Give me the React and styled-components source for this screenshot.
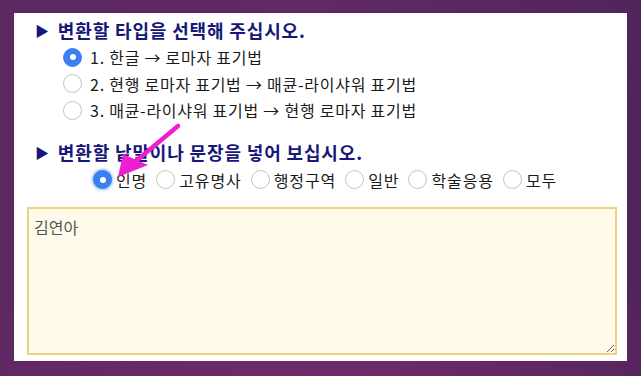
import React, { useState } from "react";
import styled, { createGlobalStyle } from "styled-components";

const GlobalStyle = createGlobalStyle`
  html, body {
    margin: 0;
    padding: 0;
  }
  body {
    width: 641px;
    height: 376px;
    overflow: hidden;
    background:
      radial-gradient(ellipse 420px 140px at 52% 100%, #6e2a6a 0%, rgba(110, 42, 106, 0) 100%),
      linear-gradient(100deg, #5c2860 0%, #602a62 45%, #4e2459 100%);
    font-family: "Noto Sans CJK KR", "Noto Sans", sans-serif;
  }
`;

const Stage = styled.div`
  position: relative;
  width: 641px;
  height: 376px;
  padding: 13px 0 0 14px;
  box-sizing: border-box;
`;

const Panel = styled.div`
  width: 613px;
  height: 348px;
  background: #ffffff;
  box-sizing: border-box;
  padding: 5px 10px 0 13px;
  display: flex;
  flex-direction: column;
`;

const Heading = styled.h3`
  margin: ${(p) => p.$gap || 0}px 0 0;
  padding-left: 8px;
  height: 23px;
  display: flex;
  align-items: center;
  gap: 8px;
  font-size: 18px;
  font-weight: 700;
  color: #17177a;
  letter-spacing: 0.85px;
`;

const Marker = styled.span`
  font-size: 14px;
  color: #15157a;
`;

const OptionList = styled.div`
  display: flex;
  flex-direction: column;
  padding-left: 36px;
  margin-top: 3px;
`;

const Option = styled.label`
  display: flex;
  align-items: center;
  gap: 8px;
  height: 26.5px;
  font-size: 16px;
  color: #1a1a1a;
  letter-spacing: 0.75px;
`;

const Radio = styled.span`
  width: 19px;
  height: 19px;
  box-sizing: border-box;
  border-radius: 50%;
  flex-shrink: 0;
  display: flex;
  align-items: center;
  justify-content: center;
  background: ${(p) => (p.$on ? "#3a7ff2" : "#fff")};
  border: 1px solid ${(p) => (p.$on ? "#3a7ff2" : "#c4c4c4")};
  box-shadow: ${(p) => (p.$glow ? "0 0 3px 1px rgba(58,127,242,0.55)" : "none")};
  &::after {
    content: "";
    width: 6px;
    height: 6px;
    border-radius: 50%;
    background: #fff;
    display: ${(p) => (p.$on ? "block" : "none")};
  }
`;

const KindRow = styled.div`
  display: flex;
  align-items: center;
  gap: 9px;
  padding-left: 66px;
  margin-top: 2px;
  height: 28px;
`;

const Kind = styled.label`
  display: flex;
  align-items: center;
  gap: 4px;
  font-size: 16px;
  color: #1a1a1a;
  letter-spacing: 0.9px;
`;

const Input = styled.textarea`
  margin-top: 13px;
  width: 590px;
  height: 148px;
  box-sizing: border-box;
  border: 2px solid #ecd27e;
  background: #fffaea;
  padding: 6px 5px;
  font-family: "Noto Sans CJK KR", "Noto Sans", sans-serif;
  font-size: 16px;
  color: #555;
  outline: none;
  resize: both;
`;

const Arrow = styled.svg`
  position: absolute;
  left: 0;
  top: 0;
  pointer-events: none;
`;

const modes = [
  "1. 한글 → 로마자 표기법",
  "2. 현행 로마자 표기법 → 매큔-라이샤워 표기법",
  "3. 매큔-라이샤워 표기법 → 현행 로마자 표기법",
];

const kinds = ["인명", "고유명사", "행정구역", "일반", "학술응용", "모두"];

export default function App() {
  const [mode, setMode] = useState(0);
  const [kind, setKind] = useState(0);
  const [text, setText] = useState("김연아");

  return (
    <Stage>
      <GlobalStyle />
      <Panel>
        <Heading>
          <Marker>▶</Marker>변환할 타입을 선택해 주십시오.
        </Heading>
        <OptionList>
          {modes.map((m, i) => (
            <Option key={m} onClick={() => setMode(i)}>
              <Radio $on={mode === i} />
              {m}
            </Option>
          ))}
        </OptionList>
        <Heading $gap={17}>
          <Marker>▶</Marker>변환할 낱말이나 문장을 넣어 보십시오.
        </Heading>
        <KindRow>
          {kinds.map((k, i) => (
            <Kind key={k} onClick={() => setKind(i)}>
              <Radio $on={kind === i} $glow={kind === i} />
              {k}
            </Kind>
          ))}
        </KindRow>
        <Input value={text} onChange={(e) => setText(e.target.value)} />
      </Panel>
      <Arrow width="641" height="376" viewBox="0 0 641 376">
        <line x1="178" y1="126" x2="136" y2="161" stroke="#ee1fcf" strokeWidth="4.5" strokeLinecap="round" />
        <polygon points="118,177 123,154 148,165" fill="#ee1fcf" />
      </Arrow>
    </Stage>
  );
}
